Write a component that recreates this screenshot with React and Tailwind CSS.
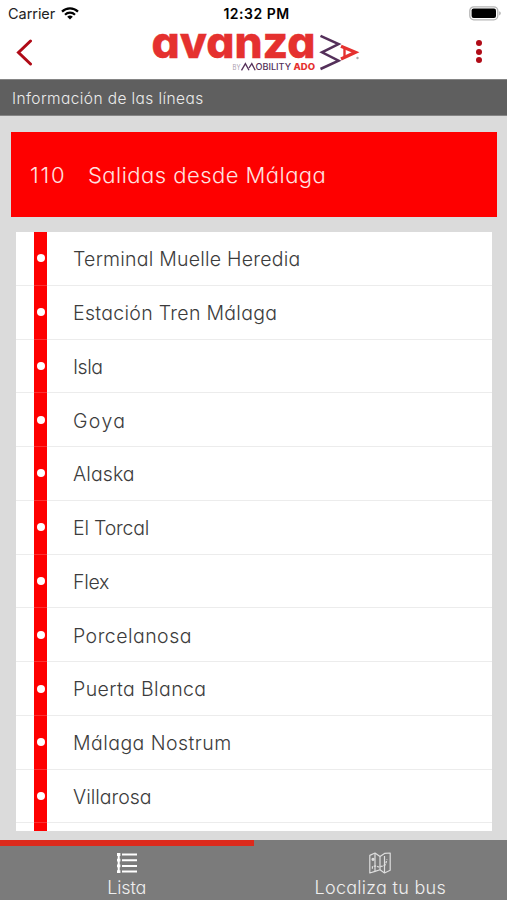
import React from 'react';

const stops = [
  { name: 'Terminal Muelle Heredia', tracking: 'tracking-[0.23px]' },
  { name: 'Estación Tren Málaga', tracking: 'tracking-[0.3px]' },
  { name: 'Isla', tracking: 'tracking-[-0.5px]' },
  { name: 'Goya', tracking: 'tracking-[1.35px]' },
  { name: 'Alaska', tracking: 'tracking-[0.1px]' },
  { name: 'El Torcal', tracking: 'tracking-[-0.2px]' },
  { name: 'Flex', tracking: 'tracking-[-0.3px]' },
  { name: 'Porcelanosa', tracking: 'tracking-[0.47px]' },
  { name: 'Puerta Blanca', tracking: 'tracking-[0.4px]' },
  { name: 'Málaga Nostrum', tracking: 'tracking-[0.45px]' },
  { name: 'Villarosa', tracking: 'tracking-[0px]' },
];

const StatusBar = () => (
  <div className="grid grid-cols-3 items-center h-[27px] pl-2 pr-[6px] text-black">
    <div className="flex items-center gap-[6px]">
      <span className="pt-px text-[14.5px] leading-none tracking-[-0.05px] text-[#222]">Carrier</span>
      <svg width="18" height="13" viewBox="0 0 18 13" fill="none" stroke="#000" strokeWidth="2.2">
        <path d="M1 4.6a11.4 11.4 0 0 1 16 0" />
        <path d="M4 7.7a7.2 7.2 0 0 1 10 0" />
        <path d="M9 12.6 6.2 9.8a4 4 0 0 1 5.6 0z" fill="#000" stroke="none" />
      </svg>
    </div>
    <span className="pl-[4px] text-center text-[14px] leading-none font-semibold tracking-[0.5px] whitespace-nowrap">12:32 PM</span>
    <svg className="justify-self-end" width="32" height="15" viewBox="0 0 32 15">
      <rect x="0.8" y="0.8" width="28" height="13" rx="4" fill="#fff" stroke="#b5b5b5" strokeWidth="1.3" />
      <rect x="2.6" y="2.6" width="24.4" height="9.4" rx="2" fill="#000" />
      <path d="M30.4 5.2v4.2c1.6-.6 1.6-3.6 0-4.2z" fill="#999" />
    </svg>
  </div>
);

const Logo = () => (
  <svg width="212" height="46" viewBox="150 30 212 46" className="overflow-visible [font-feature-settings:'cv11']">
    <text x="151.5" y="58.4" fontSize="43" fontWeight="800" fill="#e5312f" stroke="#e5312f" strokeWidth="0.4" textLength="164" lengthAdjust="spacingAndGlyphs">avanza</text>
    <text x="232.5" y="70.3" fontSize="7" fill="#a99aad" textLength="8" lengthAdjust="spacingAndGlyphs">BY</text>
    <path d="M241.5 70.3 245.4 63.6l3.6 6.7M249 68l2.8-4.4 3.4 6.7" fill="none" stroke="#54305a" strokeWidth="1.3" />
    <text x="255.5" y="70.3" fontSize="8.8" fontWeight="500" fill="#54305a" textLength="35.5" lengthAdjust="spacingAndGlyphs">OBILITY</text>
    <text x="293.5" y="70.3" fontSize="8.8" fontWeight="800" fill="#e5312f" textLength="21.5" lengthAdjust="spacingAndGlyphs">ADO</text>
    <path d="M320.5 35.8 338.6 44 322 52.3 338.6 60.7 320.5 69" fill="none" stroke="#54305a" strokeWidth="2.5" />
    <path d="M341 46.2 355.5 52.3 341 59" fill="none" stroke="#e5312f" strokeWidth="3.2" />
    <path d="M344.5 48.5v8" fill="none" stroke="#e5312f" strokeWidth="2.4" />
    <circle cx="357.5" cy="58" r="1.2" fill="#aaa" />
  </svg>
);

const ListIcon = () => (
  <svg width="22" height="22" viewBox="0 0 22 22" fill="none" stroke="#fff">
    <path d="M6 2.5h15M6 8.2h15M6 13.9h15M6 19.6h15" strokeWidth="2" />
    <path d="M2.7 1v20" strokeWidth="2" />
    <path d="M1 2.5h3.4M1 8.2h3.4M1 13.9h3.4M1 19.6h3.4" strokeWidth="2.8" />
  </svg>
);

const MapIcon = () => (
  <svg width="22" height="22" viewBox="0 0 22 22" fill="none" stroke="#dedede" strokeWidth="1.2" strokeLinejoin="round">
    <path d="M.8 3.4 6 1l5 3.4 4.5-3L21.2 1v17.2L15.5 21 11 17.8 6 19.4.8 21z" />
    <path d="M6 1v18.4M11 4.4v13.4M15.5 4v17" />
    <path d="M3.4 16.8v-2.2l4-.8 2 1.2 4-.8 3-1.4 1.6-5.4" strokeDasharray="2.5 1" />
    <circle cx="4" cy="7.3" r="1" fill="#dedede" />
  </svg>
);

const App = () => {
  return (
    <div className="w-[507px] h-[900px] overflow-hidden flex flex-col bg-[#dbdbdb] font-['Inter',sans-serif]">
      <header className="h-[79px] shrink-0 bg-white">
        <StatusBar />
        <div className="flex items-start pt-[3px] pl-4 pr-[22px]">
          <svg className="mt-[9px]" width="18" height="28" viewBox="0 0 18 28" fill="none" stroke="#b00b17" strokeWidth="3" strokeLinecap="round">
            <path d="M14.5 2 2.5 13.5l12 11.5" />
          </svg>
          <div className="ml-[116px]"><Logo /></div>
          <div className="flex flex-col gap-[2.5px] w-[13px] pt-[10px] ml-auto items-center">
            <span className="size-[6px] rounded-full bg-[#b00b17]" />
            <span className="size-[6px] rounded-full bg-[#b00b17]" />
            <span className="size-[6px] rounded-full bg-[#b00b17]" />
          </div>
        </div>
      </header>

      <div className="h-[37px] shrink-0 flex items-center pt-[2px] pl-3 bg-[#5f5f5f] border-y border-[#858585] text-[#ececec] text-[15.5px] font-light tracking-[0.4px] [font-feature-settings:'cv11']">
        Información de las líneas
      </div>

      <main className="flex-1 min-h-0 pt-4 pl-[11px] pr-[10px] [font-feature-settings:'cv11']">
        <div className="h-[85px] flex items-center pt-px bg-[#fe0000] text-[#ffe3e0] text-[22px] font-light">
          <span className="w-[58px] ml-[19px] tracking-[1.9px]">110</span>
          <span className="tracking-[0.47px]">Salidas desde Málaga</span>
        </div>

        <ul className="mt-[15px] ml-[5px] mr-[5px] h-[599px] overflow-hidden bg-white">
          {stops.map((stop) => (
            <li key={stop.name} className="h-[53.78px] flex border-b border-[#ececec]">
              <span className="w-[13px] ml-[18px] -mb-px shrink-0 flex items-center justify-center bg-[#fe0000] border-b border-[#fb3030]">
                <span className="size-[8px] rounded-full bg-white" />
              </span>
              <span className={`ml-[26px] pt-[3px] self-center text-[19.5px] font-light text-[#3c3c3c] ${stop.tracking}`}>{stop.name}</span>
            </li>
          ))}
          <li className="h-[53.78px] flex">
            <span className="w-[13px] ml-[18px] bg-[#fe0000]" />
          </li>
        </ul>
      </main>

      <nav className="h-[60px] shrink-0 grid grid-cols-2 bg-[#7b7b7b] text-[#eee] text-[18px] font-light [font-feature-settings:'cv11']">
        <button className="relative flex flex-col items-center pt-[12px]">
          <span className="absolute top-0 left-0 h-[6px] w-full bg-[#dc2a1c]" />
          <ListIcon />
          <span className="leading-6 mt-[2px] tracking-[-0.1px]">Lista</span>
        </button>
        <button className="flex flex-col items-center pt-[12px]">
          <MapIcon />
          <span className="leading-6 mt-[2px] tracking-[0.28px]">Localiza tu bus</span>
        </button>
      </nav>
    </div>
  );
};

export default App;
